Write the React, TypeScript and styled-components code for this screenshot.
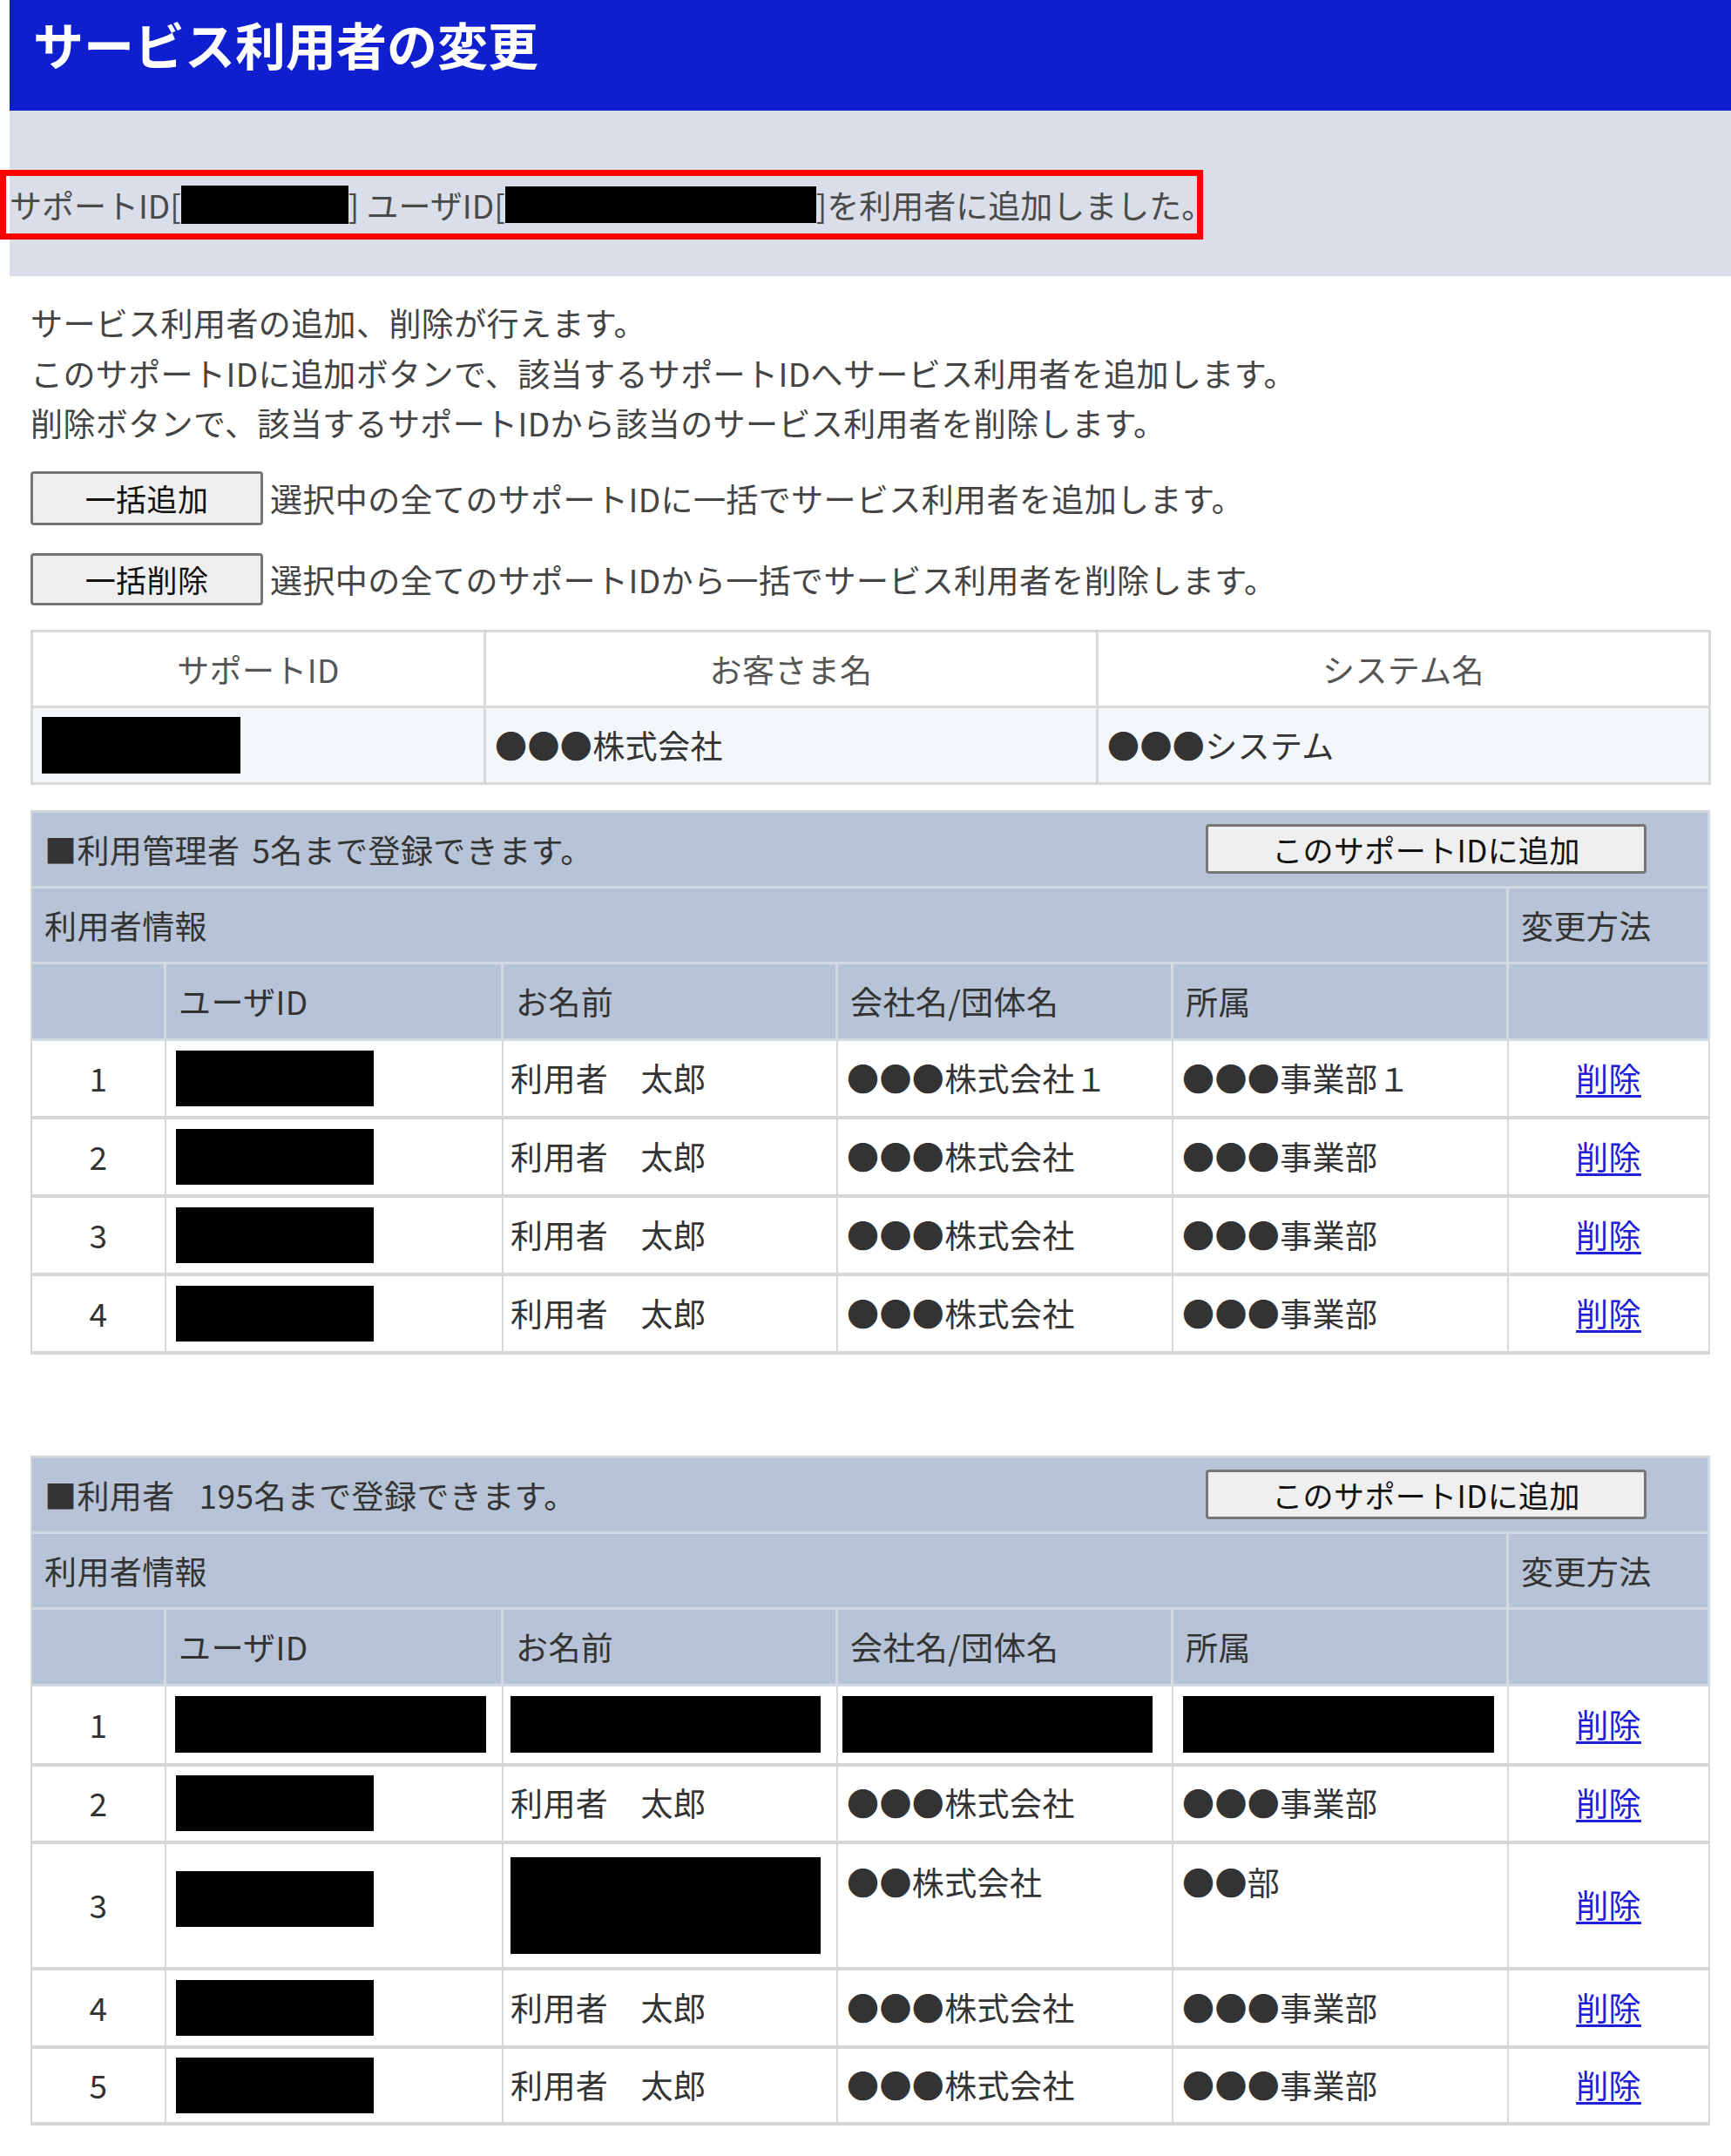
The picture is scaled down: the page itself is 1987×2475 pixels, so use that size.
import React from "react";
import styled, { createGlobalStyle } from "styled-components";

const GlobalStyle = createGlobalStyle`
  html, body { margin: 0; padding: 0; background: #ffffff; }
  body {
    font-family: "Noto Sans CJK JP", "Noto Sans", sans-serif;
    color: #333333;
    letter-spacing: 0.4px;
  }
  * { box-sizing: border-box; }
`;

const Page = styled.div`
  width: 1987px;
  padding-bottom: 36px;
`;

const TitleBar = styled.h1`
  margin: 0 0 0 11px;
  height: 127px;
  padding: 21px 0 0 27px;
  background: #0f1fcf;
  color: #ffffff;
  font-size: 58px;
  line-height: 58px;
  font-weight: 700;
  letter-spacing: 0;
`;

const NoticeBand = styled.div`
  margin-left: 11px;
  height: 190px;
  padding-top: 68px;
  background: #d9dee8;
`;

const NoticeBox = styled.div`
  margin-left: -11px;
  width: 1381px;
  height: 80px;
  border: 7px solid #ff0000;
  padding-left: 4px;
  display: flex;
  align-items: center;
  font-size: 37px;
  line-height: 58px;
  color: #4a4a4a;
  white-space: nowrap;
  letter-spacing: 0;
`;

const Redacted = styled.span<{ $w: number; $h: number; $block?: boolean; $lift?: number }>`
  display: ${(p) => (p.$block ? "block" : "inline-block")};
  width: ${(p) => p.$w}px;
  height: ${(p) => p.$h}px;
  margin-bottom: ${(p) => (p.$lift ? p.$lift * 2 : 0)}px;
  background: #000000;
  flex: none;
`;

const Main = styled.div`
  padding: 0 26px 0 35px;
`;

const Intro = styled.p`
  margin: 25px 0 0;
  font-size: 37px;
  line-height: 57.5px;
  color: #444444;
`;

const ActionRow = styled.div<{ $mt: number }>`
  display: flex;
  align-items: center;
  gap: 8px;
  margin-top: ${(p) => p.$mt}px;
  font-size: 37px;
  color: #444444;
`;

const PlainButton = styled.button<{ $w: number; $h: number }>`
  width: ${(p) => p.$w}px;
  height: ${(p) => p.$h}px;
  flex: none;
  padding: 0;
  border: 3px solid #767676;
  border-radius: 4px;
  background: #efefef;
  color: #111111;
  font-family: "Noto Sans CJK JP", "Noto Sans", sans-serif;
  font-size: 35px;
  line-height: 1;
  letter-spacing: 0.4px;
`;

const SummaryTable = styled.table`
  width: 100%;
  margin-top: 28px;
  border-collapse: separate;
  border-spacing: 0;
  table-layout: fixed;
  border-top: 3px solid #d9d9d9;
  border-left: 3px solid #d9d9d9;
  font-size: 37px;
`;

const SummaryHead = styled.th`
  height: 87px;
  padding: 0;
  border-right: 3px solid #d9d9d9;
  border-bottom: 3px solid #d9d9d9;
  background: #ffffff;
  font-weight: 400;
  text-align: center;
  color: #555555;
`;

const SummaryCell = styled.td`
  height: 88px;
  padding: 0 16px 0 10px;
  border-right: 3px solid #d9d9d9;
  border-bottom: 3px solid #d9d9d9;
  background: #f4f7fa;
  color: #333333;
  vertical-align: middle;
`;

const SectionTable = styled.table<{ $mt: number }>`
  width: 100%;
  margin-top: ${(p) => p.$mt}px;
  border-collapse: separate;
  border-spacing: 0;
  table-layout: fixed;
  border-top: 3px solid #cfd3da;
  border-left: 2px solid #d6d6d6;
  font-size: 37px;
`;

const HeadCell = styled.td<{ $h: number; $align?: string }>`
  height: ${(p) => p.$h}px;
  padding: 0 14px;
  background: #b7c3d6;
  border-right: 3px solid #d3d9e2;
  border-bottom: 3px solid #d3d9e2;
  color: #333333;
  text-align: ${(p) => p.$align || "left"};
  vertical-align: middle;
  white-space: nowrap;
`;

const TitleInner = styled.div`
  display: flex;
  align-items: center;
  justify-content: space-between;
  padding-right: 56px;
`;

const Spacer = styled.span<{ $w: number }>`
  display: inline-block;
  width: ${(p) => p.$w}px;
`;

const DataCell = styled.td<{ $h: number; $align?: string; $top?: boolean; $pl?: number }>`
  height: ${(p) => p.$h}px;
  padding: ${(p) => (p.$top ? "15px" : "0")} 10px 0 ${(p) => p.$pl ?? 14}px;
  background: #ffffff;
  border-right: 2px solid #d9d9d9;
  border-bottom: 4px solid #d6d6d6;
  color: #333333;
  text-align: ${(p) => p.$align || "left"};
  vertical-align: ${(p) => (p.$top ? "top" : "middle")};
  line-height: 57.5px;
  white-space: nowrap;
`;

const DeleteLink = styled.a`
  color: #2020d8;
  text-decoration: underline;
  text-underline-offset: 4px;
  cursor: pointer;
`;

type Row = {
  no: number;
  id: React.ReactNode;
  name: React.ReactNode;
  company: React.ReactNode;
  dept: React.ReactNode;
  h: number;
  top?: boolean;
  redactRow?: boolean;
};

const idBox = <Redacted $block $w={227} $h={64} />;

const managerRows: Row[] = [
  { no: 1, id: idBox, name: "利用者　太郎", company: "●●●株式会社１", dept: "●●●事業部１", h: 90 },
  { no: 2, id: idBox, name: "利用者　太郎", company: "●●●株式会社", dept: "●●●事業部", h: 90 },
  { no: 3, id: idBox, name: "利用者　太郎", company: "●●●株式会社", dept: "●●●事業部", h: 90 },
  { no: 4, id: idBox, name: "利用者　太郎", company: "●●●株式会社", dept: "●●●事業部", h: 90 },
];

const userRows: Row[] = [
  {
    no: 1,
    id: <Redacted $block $w={357} $h={65} />,
    name: <Redacted $block $w={356} $h={65} />,
    company: <Redacted $block $w={356} $h={65} />,
    dept: <Redacted $block $w={357} $h={65} />,
    h: 92,
    redactRow: true,
  },
  { no: 2, id: idBox, name: "利用者　太郎", company: "●●●株式会社", dept: "●●●事業部", h: 89 },
  {
    no: 3,
    id: <Redacted $block $w={227} $h={64} $lift={7} />,
    name: <Redacted $block $w={356} $h={111} />,
    company: "●●株式会社",
    dept: "●●部",
    h: 145,
    top: true,
  },
  { no: 4, id: idBox, name: "利用者　太郎", company: "●●●株式会社", dept: "●●●事業部", h: 90 },
  { no: 5, id: idBox, name: "利用者　太郎", company: "●●●株式会社", dept: "●●●事業部", h: 88 },
];

const Cols = () => (
  <colgroup>
    <col style={{ width: 154 }} />
    <col style={{ width: 387 }} />
    <col style={{ width: 384 }} />
    <col style={{ width: 385 }} />
    <col style={{ width: 385 }} />
    <col style={{ width: 231 }} />
  </colgroup>
);

const UserSection: React.FC<{ title: React.ReactNode; rows: Row[]; mt: number }> = ({ title, rows, mt }) => (
  <SectionTable $mt={mt}>
    <Cols />
    <tbody>
      <tr>
        <HeadCell $h={87} colSpan={6}>
          <TitleInner>
            <span>{title}</span>
            <PlainButton $w={506} $h={57}>このサポートIDに追加</PlainButton>
          </TitleInner>
        </HeadCell>
      </tr>
      <tr>
        <HeadCell $h={87} colSpan={5}>利用者情報</HeadCell>
        <HeadCell $h={87}>変更方法</HeadCell>
      </tr>
      <tr>
        <HeadCell $h={88} />
        <HeadCell $h={88}>ユーザID</HeadCell>
        <HeadCell $h={88}>お名前</HeadCell>
        <HeadCell $h={88}>会社名/団体名</HeadCell>
        <HeadCell $h={88}>所属</HeadCell>
        <HeadCell $h={88} />
      </tr>
      {rows.map((r) => (
        <tr key={r.no}>
          <DataCell $h={r.h} $align="center" $pl={10}>{r.no}</DataCell>
          <DataCell $h={r.h} $pl={r.redactRow ? 10 : 11}>{r.id}</DataCell>
          <DataCell $h={r.h} $pl={8}>{r.name}</DataCell>
          <DataCell $h={r.h} $top={r.top} $pl={r.redactRow ? 5 : 10}>{r.company}</DataCell>
          <DataCell $h={r.h} $top={r.top} $pl={r.redactRow ? 11 : 10}>{r.dept}</DataCell>
          <DataCell $h={r.h} $align="center" $pl={10}>
            <DeleteLink>削除</DeleteLink>
          </DataCell>
        </tr>
      ))}
    </tbody>
  </SectionTable>
);

export default function App() {
  return (
    <>
      <GlobalStyle />
      <Page>
        <TitleBar>サービス利用者の変更</TitleBar>
        <NoticeBand>
          <NoticeBox>
            <span>サポートID[</span>
            <Redacted $w={192} $h={44} />
            <span>]&nbsp;ユーザID[</span>
            <Redacted $w={357} $h={42} />
            <span>]を利用者に追加しました。</span>
          </NoticeBox>
        </NoticeBand>
        <Main>
          <Intro>
            サービス利用者の追加、削除が行えます。
            <br />
            このサポートIDに追加ボタンで、該当するサポートIDへサービス利用者を追加します。
            <br />
            削除ボタンで、該当するサポートIDから該当のサービス利用者を削除します。
          </Intro>
          <ActionRow $mt={26}>
            <PlainButton $w={267} $h={62}>一括追加</PlainButton>
            <span>選択中の全てのサポートIDに一括でサービス利用者を追加します。</span>
          </ActionRow>
          <ActionRow $mt={32}>
            <PlainButton $w={267} $h={60}>一括削除</PlainButton>
            <span>選択中の全てのサポートIDから一括でサービス利用者を削除します。</span>
          </ActionRow>
          <SummaryTable>
            <colgroup>
              <col style={{ width: 520 }} />
              <col style={{ width: 703 }} />
              <col style={{ width: 703 }} />
            </colgroup>
            <tbody>
              <tr>
                <SummaryHead>サポートID</SummaryHead>
                <SummaryHead>お客さま名</SummaryHead>
                <SummaryHead>システム名</SummaryHead>
              </tr>
              <tr>
                <SummaryCell>
                  <Redacted $block $w={228} $h={65} />
                </SummaryCell>
                <SummaryCell>●●●株式会社</SummaryCell>
                <SummaryCell>●●●システム</SummaryCell>
              </tr>
            </tbody>
          </SummaryTable>
          <UserSection
            mt={29}
            rows={managerRows}
            title={
              <>
                ■利用管理者<Spacer $w={14} />5名まで登録できます。
              </>
            }
          />
          <UserSection
            mt={116}
            rows={userRows}
            title={
              <>
                ■利用者<Spacer $w={28} />195名まで登録できます。
              </>
            }
          />
        </Main>
      </Page>
    </>
  );
}
